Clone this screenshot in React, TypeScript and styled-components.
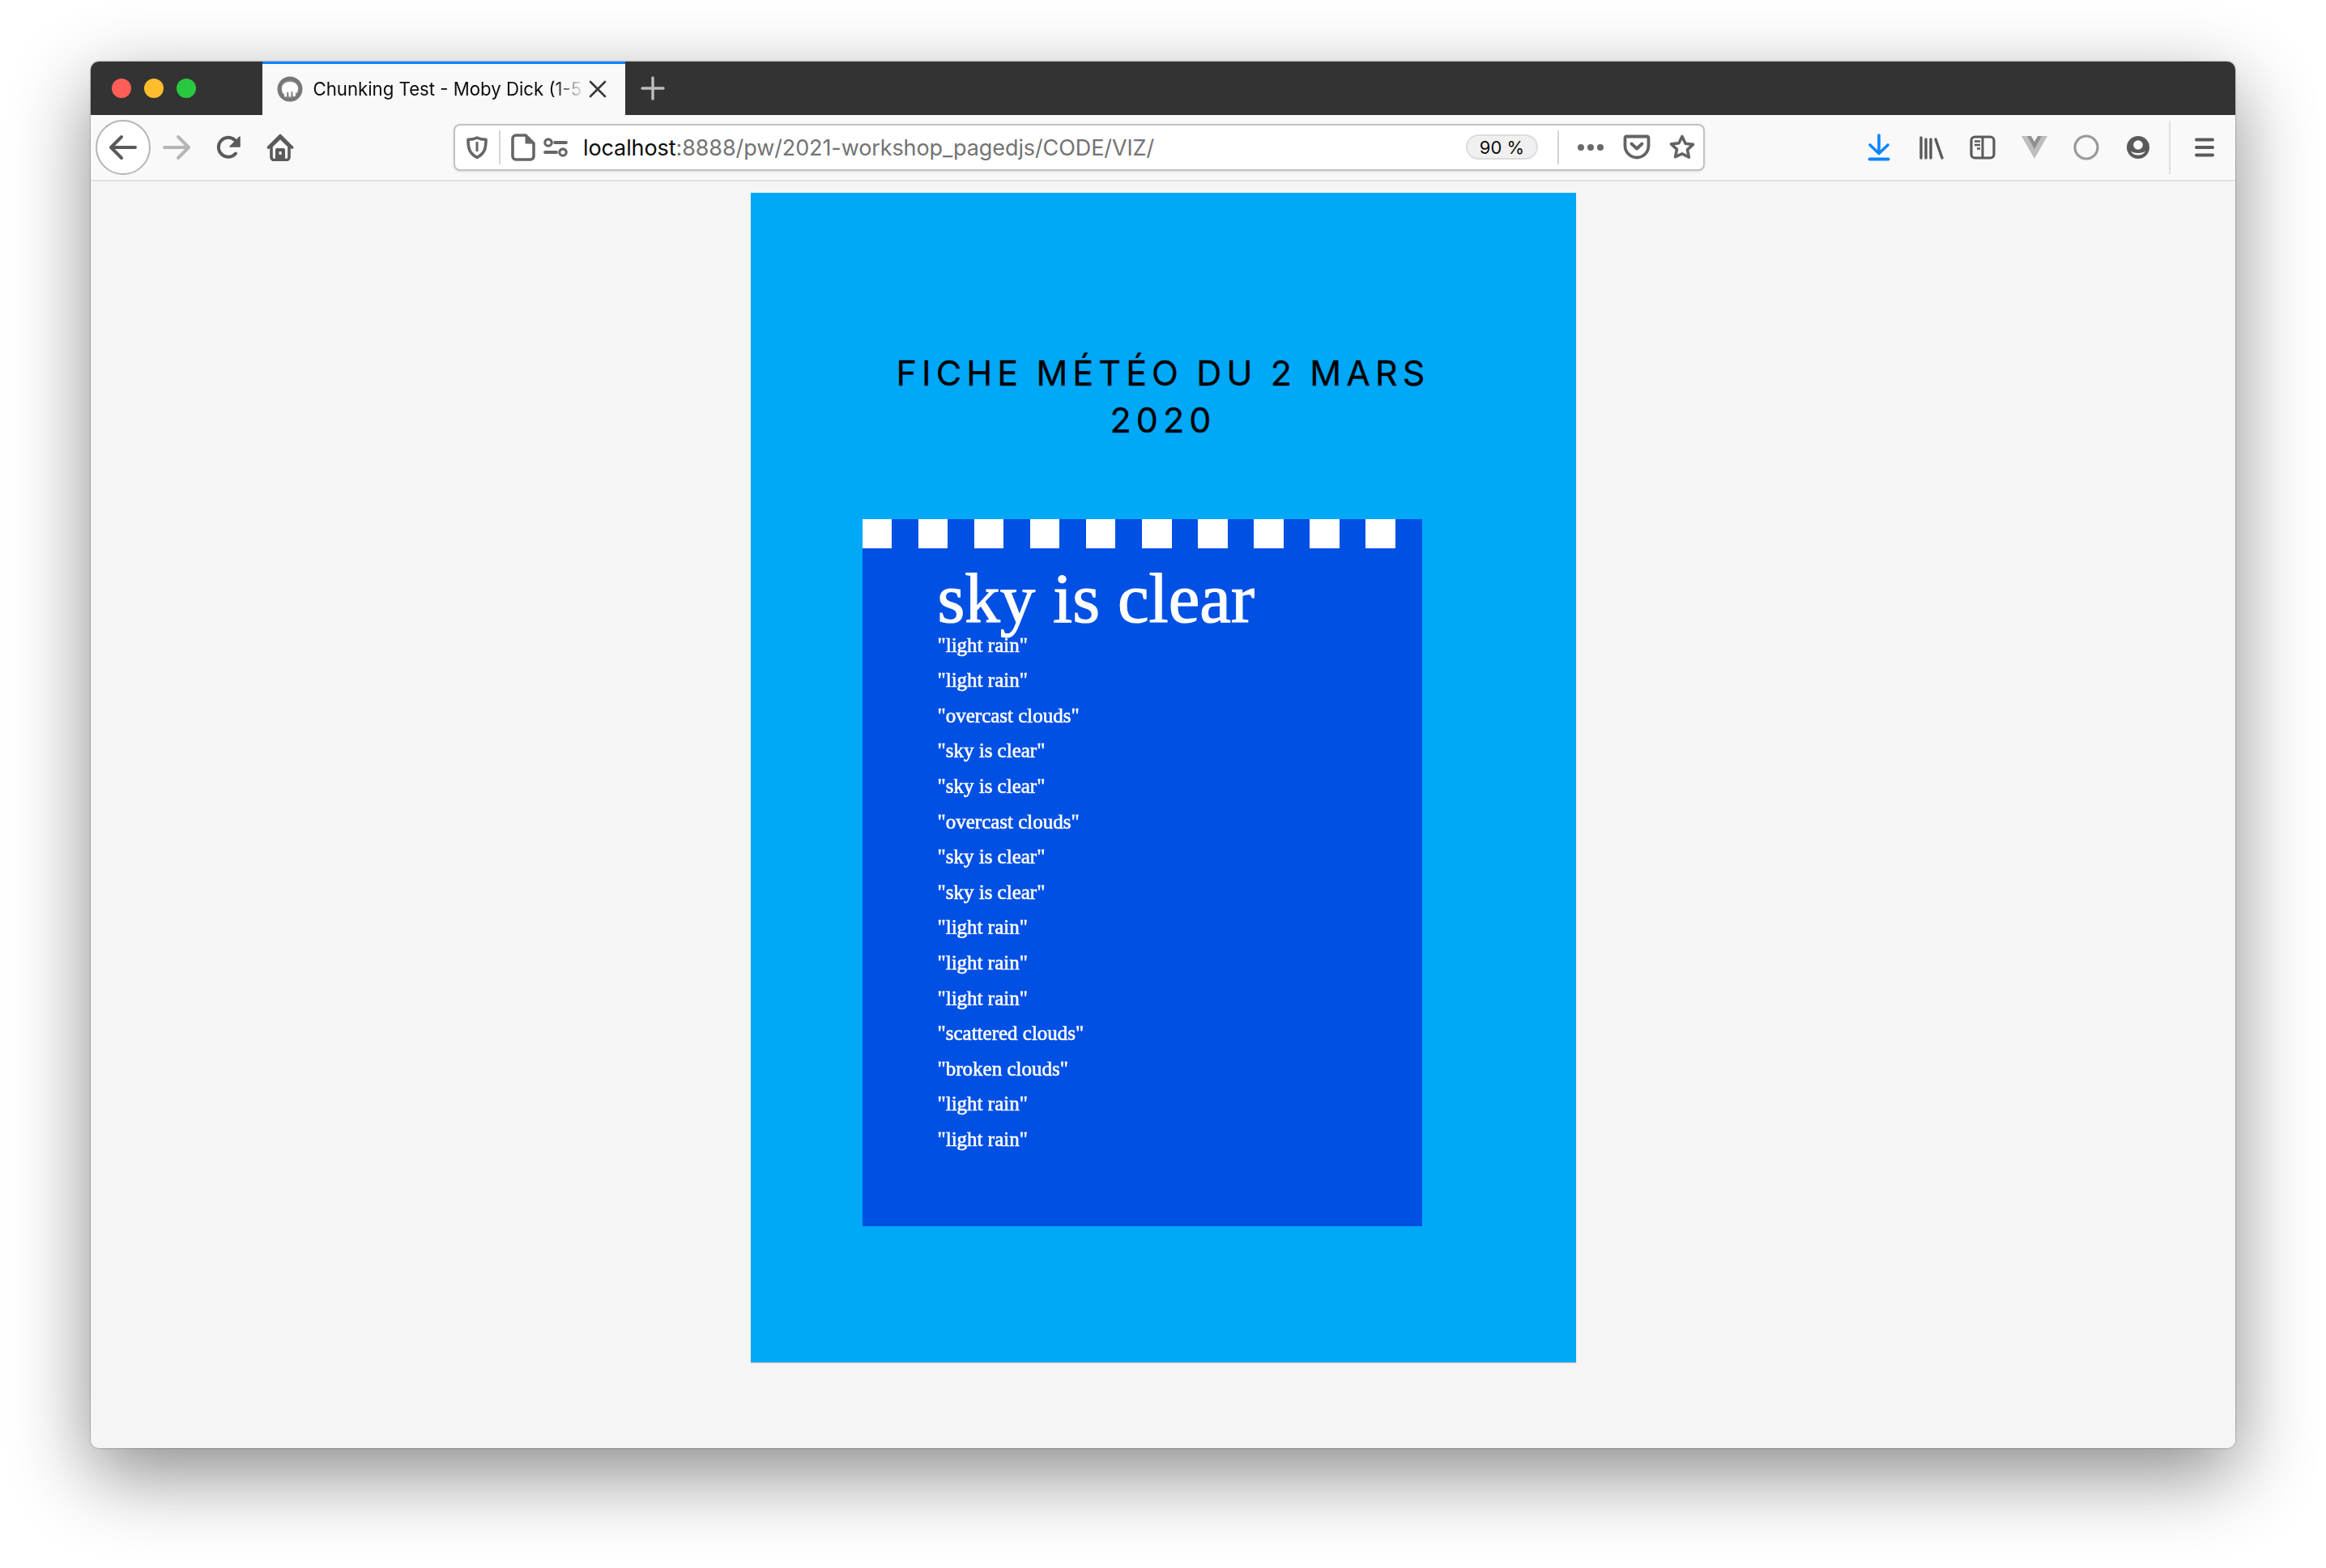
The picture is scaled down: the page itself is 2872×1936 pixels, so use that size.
import React from "react";
import styled, { createGlobalStyle } from "styled-components";

const Global = createGlobalStyle`
  html, body { margin: 0; padding: 0; background: #fff; }
  body { width: 2872px; height: 1936px; overflow: hidden; font-family: "Inter", "Liberation Sans", sans-serif; }
  * { box-sizing: border-box; }
`;

const Stage = styled.div`
  width: 2872px;
  height: 1936px;
  padding: 76px 112px 148px;
`;

const Window = styled.div`
  width: 2648px;
  height: 1712px;
  display: flex;
  flex-direction: column;
  border-radius: 10px;
  overflow: hidden;
  background: #f5f5f5;
  box-shadow: 0 32px 96px rgba(0, 0, 0, 0.46), 0 0 2px rgba(0, 0, 0, 0.55);
`;

const TabStrip = styled.div`
  height: 66px;
  flex: none;
  display: flex;
  align-items: stretch;
  background: #333333;
`;

const Lights = styled.div`
  width: 211.5px;
  flex: none;
  display: flex;
  align-items: center;
  gap: 16px;
  padding-left: 26px;
`;

const Light = styled.span<{ $color: string }>`
  width: 24px;
  height: 24px;
  border-radius: 50%;
  background: ${(p) => p.$color};
`;

const Tab = styled.div`
  width: 448.5px;
  flex: none;
  display: flex;
  align-items: center;
  background: #f9f9f9;
  border-top: 3px solid #0a84ff;
  padding-left: 18px;
  padding-bottom: 2px;
`;

const TabTitle = styled.div`
  margin-left: 13px;
  padding-top: 1px;
  width: 331px;
  flex: none;
  overflow: hidden;
  white-space: nowrap;
  font-size: 22.2px;
  line-height: 30px;
  color: #0c0c0d;
  -webkit-mask-image: linear-gradient(to right, #000 90%, rgba(0, 0, 0, 0.1) 100%);
  mask-image: linear-gradient(to right, #000 90%, rgba(0, 0, 0, 0.1) 100%);
`;

const TabClose = styled.span`
  margin-left: 9px;
  display: flex;
`;

const NewTab = styled.span`
  margin-left: 18.5px;
  display: flex;
  align-items: center;
`;

const Toolbar = styled.div`
  height: 82px;
  flex: none;
  display: flex;
  align-items: center;
  padding: 0 0 1px 6px;
  background: #f9f9f9;
  border-bottom: 2px solid #e1e1e2;
`;

const BackCircle = styled.div`
  width: 68px;
  height: 68px;
  flex: none;
  display: flex;
  align-items: center;
  justify-content: center;
  border-radius: 50%;
  background: #fff;
  border: 2px solid #b5b5b5;
`;

const Slot = styled.span<{ $w?: number }>`
  width: ${(p) => p.$w ?? 64}px;
  height: 44px;
  flex: none;
  display: flex;
  align-items: center;
  justify-content: center;

  svg {
    flex: none;
  }
`;

const UrlBar = styled.div`
  width: 1545px;
  height: 58px;
  margin-left: 182px;
  margin-right: 183px;
  flex: none;
  display: flex;
  align-items: center;
  background: #fff;
  border: 2px solid #c2c2c2;
  border-radius: 8px;
  box-shadow: 0 1px 3px rgba(0, 0, 0, 0.12);
`;

const UrlSep = styled.span<{ $h: number }>`
  width: 2px;
  height: ${(p) => p.$h}px;
  flex: none;
  background: #d4d4d4;
`;

const UrlText = styled.div`
  margin-left: 22px;
  padding-top: 2px;
  flex: 1;
  min-width: 0;
  white-space: nowrap;
  font-size: 27px;
  line-height: 34px;
  letter-spacing: -0.1px;
  color: #737374;
`;

const Host = styled.span`
  color: #0c0c0d;
`;

const Zoom = styled.div`
  width: 89px;
  height: 31px;
  flex: none;
  display: flex;
  align-items: center;
  justify-content: center;
  background: #f0f0f0;
  border: 2px solid #dcdcdc;
  border-radius: 16px;
  font-size: 22px;
  color: #0c0c0d;
`;

const ZoomGap = styled.span`
  width: 24px;
  flex: none;
`;

const ZoomGapAfter = styled.span`
  width: 12px;
  flex: none;
`;

const ToolSep = styled.span`
  width: 2px;
  height: 66px;
  margin: 0 10px 0 6px;
  flex: none;
  background: #e0e0e0;
`;

const Content = styled.div`
  flex: 1;
  min-height: 0;
  padding-top: 14px;
  background: #f5f5f5;
`;

const Sheet = styled.div`
  width: 1019px;
  height: 1444px;
  margin: 0 auto;
  padding-top: 193px;
  background: #00a8f8;
  box-shadow: 0 1px 1px rgba(0, 0, 0, 0.2);
`;

const Title = styled.h1`
  width: 700px;
  margin: 0 auto;
  font-family: "Inter", "Liberation Sans", sans-serif;
  font-weight: 400;
  font-size: 43px;
  line-height: 58px;
  letter-spacing: 6.1px;
  word-spacing: -2px;
  text-align: center;
  color: #000;
  -webkit-text-stroke: 0.3px #000;
`;

const Panel = styled.section`
  width: 691px;
  height: 873px;
  margin: 94px 0 0 138px;
  background: #0050e4;
  font-family: "Liberation Serif", "Times New Roman", serif;
  color: #fff;
`;

const Stripes = styled.div`
  display: flex;
  gap: 32.5px;
  height: 36px;
`;

const Stripe = styled.span`
  width: 36.6px;
  flex: none;
  background: #fff;
`;

const Body = styled.div`
  padding: 25.6px 0 0 93px;
`;

const Heading = styled.h2`
  margin: 0;
  font-weight: 400;
  font-size: 87px;
  line-height: 72px;
  -webkit-text-stroke: 1.2px #fff;
  filter: blur(0.6px);
`;

const List = styled.ul`
  list-style: none;
  margin: 0;
  padding: 0;
`;

const Item = styled.li`
  font-size: 25px;
  line-height: 43.6px;
  -webkit-text-stroke: 0.6px #fff;
  filter: blur(0.6px);
`;

const items = [
  "light rain", "light rain", "overcast clouds", "sky is clear", "sky is clear",
  "overcast clouds", "sky is clear", "sky is clear", "light rain", "light rain",
  "light rain", "scattered clouds", "broken clouds", "light rain", "light rain",
];

const DK = "#5a5a5c";
const MID = "#636364";

const Arrow = ({ color, flip }: { color: string; flip?: boolean }) => (
  <svg width="36" height="32" viewBox="0 0 36 32" fill="none" stroke={color} strokeWidth="4" strokeLinecap="round" strokeLinejoin="round">
    <g transform={flip ? "translate(36 0) scale(-1 1)" : undefined}>
      <path d="M3 16h30M16 3 3 16l13 13" />
    </g>
  </svg>
);

const Reload = () => (
  <svg width="34" height="32" viewBox="0 0 34 32" fill="none">
    <path d="M26 23.500A12 12 0 1 1 25 7" stroke={DK} strokeWidth="4" strokeLinecap="round" />
    <path d="M31 3v12H19z" fill={DK} stroke={DK} strokeWidth="1.500" strokeLinejoin="round" />
  </svg>
);

const Home = () => (
  <svg width="34" height="34" viewBox="0 0 34 34" fill="none">
    <path d="M2.500 17 17 2.500 31.500 17" stroke={DK} strokeWidth="3.600" strokeLinecap="round" strokeLinejoin="round" />
    <path d="M6 15.500 17 5l11 10.500V29a3.500 3.500 0 0 1-3.500 3.500h-15A3.500 3.500 0 0 1 6 29z" stroke={DK} strokeWidth="3.600" fill="#f9f9f9" strokeLinejoin="round" />
    <path d="M11 32V20a2 2 0 0 1 2-2h8a2 2 0 0 1 2 2v12z" fill={DK} />
    <rect x="15.600" y="22" width="3" height="4" fill="#f9f9f9" />
  </svg>
);

const FaviconArt = styled.svg`
  flex: none;
  filter: blur(0.6px);
`;

const Favicon = () => (
  <FaviconArt width="32" height="32" viewBox="0 0 32 32">
    <circle cx="16" cy="16" r="15.500" fill="#777" />
    <circle cx="16" cy="16" r="11" fill="#8a8a8a" />
    <path d="M6 15c0-4.500 4-8 10-8s10 3.500 10 8c0 2-.4 4-1.200 5.500h-1.600L22.500 25h-2.700l-.6-6.500-1.700.5-.4 6.500h-2.400l-.6-6-1.800.2-.5 5.800h-2.600l-.5-4-1.500-.5C6.500 19.500 6 17.500 6 15z" fill="#fff" />
  </FaviconArt>
);

const Close = () => (
  <svg width="22" height="22" viewBox="0 0 22 22" stroke="#3b3b3d" strokeWidth="2.600" strokeLinecap="round">
    <path d="M2 2l18 18M20 2 2 20" />
  </svg>
);

const Plus = () => (
  <svg width="30" height="30" viewBox="0 0 30 30" stroke="#bdbdbd" strokeWidth="3.400" strokeLinecap="round">
    <path d="M15 2v26M2 15h26" />
  </svg>
);

const Shield = () => (
  <svg width="26" height="30" viewBox="0 0 26 30" fill="none">
    <path d="M13 3c3 1.600 6.500 2.300 11 2.300C24 16 22.500 22.500 13 27.500 3.500 22.500 2 16 2 5.300 6.500 5.300 10 4.600 13 3z" stroke="#666" strokeWidth="3.600" strokeLinejoin="round" />
    <path d="M11.500 8h3v12h-3z" fill="#666" />
  </svg>
);

const FileIcon = () => (
  <svg width="30" height="34" viewBox="0 0 30 34" fill="none">
    <path d="M6 2h12l10 10v16a4 4 0 0 1-4 4H6a4 4 0 0 1-4-4V6a4 4 0 0 1 4-4z" stroke="#666" strokeWidth="3.600" strokeLinejoin="round" />
    <path d="M18 2v10h10z" fill="#666" stroke="#666" strokeWidth="1" strokeLinejoin="round" />
  </svg>
);

const Perms = () => (
  <svg width="30" height="24" viewBox="0 0 30 24" fill="none" stroke="#666">
    <circle cx="6" cy="6" r="4.200" strokeWidth="3.200" />
    <path d="M14 6h14" strokeWidth="3.800" strokeLinecap="round" />
    <path d="M2 18h14" strokeWidth="3.800" strokeLinecap="round" />
    <circle cx="24" cy="18" r="4.200" strokeWidth="3.200" />
  </svg>
);

const Dots = () => (
  <svg width="32" height="8" viewBox="0 0 32 8" fill="#6a6a6b">
    <circle cx="4" cy="4" r="4" />
    <circle cx="16" cy="4" r="4" />
    <circle cx="28" cy="4" r="4" />
  </svg>
);

const Pocket = () => (
  <svg width="34" height="31" viewBox="0 0 34 31" fill="none">
    <path d="M4 2.500h26A1.800 1.800 0 0 1 31.500 4v10c0 8-6.500 14.500-14.500 14.500S2.500 22 2.500 14V4A1.800 1.800 0 0 1 4 2.500z" stroke={MID} strokeWidth="3.800" strokeLinejoin="round" />
    <path d="M10.500 11.500 17 17.500l6.500-6" stroke={MID} strokeWidth="3.800" strokeLinecap="round" strokeLinejoin="round" />
  </svg>
);

const Star = () => (
  <svg width="34" height="34" viewBox="0 0 34 34" fill="none">
    <path d="m17 3.500 4.100 8.700 9.400 1.200-7 6.400 1.900 9.400L17 24.900l-8.400 3.800 1.900-9.400-7-6.400 9.400-1.200z" stroke={MID} strokeWidth="3.600" strokeLinejoin="round" />
  </svg>
);

const Download = () => (
  <svg width="28" height="34" viewBox="0 0 28 34" fill="none" stroke="#0a84ff" strokeWidth="3.600" strokeLinecap="round" strokeLinejoin="round">
    <path d="M14 2v22M3 14l11 10.500L25 14" />
    <path d="M2.500 31.500h23" strokeWidth="4" />
  </svg>
);

const Library = () => (
  <svg width="32" height="30" viewBox="0 0 32 30" fill="none" stroke={DK} strokeWidth="3.400" strokeLinecap="round">
    <path d="M4 3v25M10 5v23M16 5v23M22 5l8 23" />
  </svg>
);

const Sidebar = () => (
  <svg width="32" height="30" viewBox="0 0 32 30" fill="none">
    <rect x="2" y="2" width="28" height="26" rx="4.500" stroke={DK} strokeWidth="3.200" />
    <path d="M16 3v24" stroke={DK} strokeWidth="3" />
    <path d="M6 7.500h7M6 12h7M9 16.500h4" stroke={DK} strokeWidth="2.400" />
  </svg>
);

const Vue = () => (
  <svg width="32" height="28" viewBox="0 0 32 28">
    <path d="M0 0h32L16 28z" fill="#bdbdbd" />
    <path d="M7 0h18L16 16z" fill="#8f8f8f" />
    <path d="M12 0h8l-4 7z" fill="#f9f9f9" />
  </svg>
);

const Ring = () => (
  <svg width="32" height="32" viewBox="0 0 32 32" fill="none">
    <circle cx="16" cy="16" r="14" stroke="#999" strokeWidth="3.200" />
  </svg>
);

const Account = () => (
  <svg width="28" height="28" viewBox="0 0 28 28">
    <circle cx="14" cy="14" r="14" fill={DK} />
    <circle cx="14" cy="11" r="5.800" fill="#f9f9f9" />
    <path d="M5 18.500c1.500 1.500 4.500 2.500 9 2.500s7.500-1 9-2.500c-1 3-5 5-9 5s-8-2-9-5z" fill="#f9f9f9" />
  </svg>
);

const Menu = () => (
  <svg width="24" height="24" viewBox="0 0 24 24" stroke={DK} strokeWidth="4" strokeLinecap="round">
    <path d="M2 2.500h20M2 12h20M2 21.500h20" />
  </svg>
);

export default function App() {
  return (
    <Stage>
      <Global />
      <Window>
        <TabStrip>
          <Lights>
            <Light $color="#ff5f57" />
            <Light $color="#ffbd2e" />
            <Light $color="#28c93f" />
          </Lights>
          <Tab>
            <Favicon />
            <TabTitle>Chunking Test - Moby Dick (1-5</TabTitle>
            <TabClose><Close /></TabClose>
          </Tab>
          <NewTab><Plus /></NewTab>
        </TabStrip>
        <Toolbar>
          <BackCircle><Arrow color={DK} /></BackCircle>
          <Slot><Arrow color="#b5b5b5" flip /></Slot>
          <Slot><Reload /></Slot>
          <Slot><Home /></Slot>
          <UrlBar>
            <Slot $w={54}><Shield /></Slot>
            <UrlSep $h={42} />
            <Slot $w={56}><FileIcon /></Slot>
            <Slot $w={24}><Perms /></Slot>
            <UrlText><Host>localhost</Host>:8888/pw/2021-workshop_pagedjs/CODE/VIZ/</UrlText>
            <Zoom>90 %</Zoom>
            <ZoomGap />
            <UrlSep $h={42} />
            <ZoomGapAfter />
            <Slot $w={54}><Dots /></Slot>
            <Slot $w={60}><Pocket /></Slot>
            <Slot $w={52}><Star /></Slot>
          </UrlBar>
          <Slot><Download /></Slot>
          <Slot><Library /></Slot>
          <Slot><Sidebar /></Slot>
          <Slot><Vue /></Slot>
          <Slot><Ring /></Slot>
          <Slot><Account /></Slot>
          <ToolSep />
          <Slot><Menu /></Slot>
        </Toolbar>
        <Content>
          <Sheet>
            <Title>FICHE MÉTÉO DU 2 MARS 2020</Title>
            <Panel>
              <Stripes>
                {Array.from({ length: 10 }, (_, i) => <Stripe key={i} />)}
              </Stripes>
              <Body>
                <Heading>sky is clear</Heading>
                <List>
                  {items.map((t, i) => <Item key={i}>"{t}"</Item>)}
                </List>
              </Body>
            </Panel>
          </Sheet>
        </Content>
      </Window>
    </Stage>
  );
}
